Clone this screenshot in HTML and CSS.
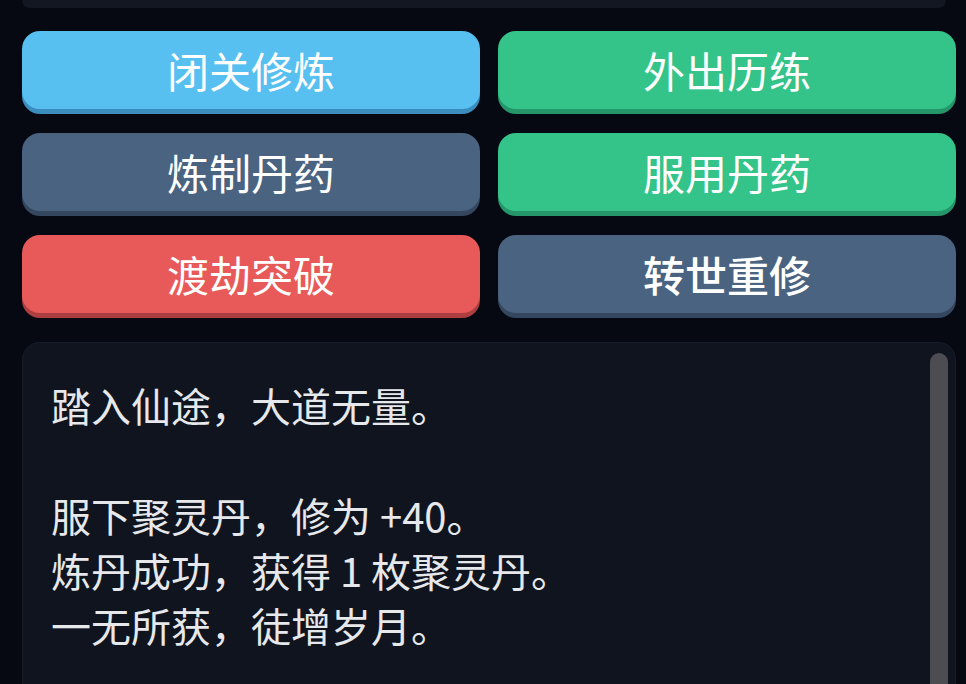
FILE: index.html
```html
<!DOCTYPE html>
<html lang="zh-CN">
<head>
<meta charset="utf-8">
<title>修仙</title>
<link rel="stylesheet" href="styles.css">
</head>
<body>
<div class="app">
  <div class="top-panel"></div>
  <div class="actions">
    <button class="btn btn-blue">闭关修炼</button>
    <button class="btn btn-green">外出历练</button>
    <button class="btn btn-slate">炼制丹药</button>
    <button class="btn btn-green">服用丹药</button>
    <button class="btn btn-red">渡劫突破</button>
    <button class="btn btn-slate btn-strong">转世重修</button>
  </div>
  <div class="log">
    <div class="log-text">
      <p class="line">踏入仙途，大道无量。</p>
      <p class="line blank">&nbsp;</p>
      <p class="line">服下聚灵丹，修为 +40。</p>
      <p class="line">炼丹成功，获得 1 枚聚灵丹。</p>
      <p class="line">一无所获，徒增岁月。</p>
    </div>
    <div class="scrollbar"></div>
  </div>
</div>
</body>
</html>
```

FILE: styles.css
```css
* { box-sizing: border-box; }

html, body {
  margin: 0;
  padding: 0;
  height: 100%;
  overflow: hidden;
  background: #060912;
  font-family: "Noto Sans CJK SC", "Noto Sans", sans-serif;
}

.app {
  height: 100vh;
  overflow: hidden;
  padding: 0 10px 0 22px;
  display: flex;
  flex-direction: column;
}

.top-panel {
  flex: none;
  height: 8px;
  background: #121722;
  border-radius: 0 0 16px 16px;
  margin-right: 10px;
}

.actions {
  flex: none;
  margin-top: 23px;
  display: grid;
  grid-template-columns: 1fr 1fr;
  column-gap: 18px;
  row-gap: 24px;
}

.btn {
  height: 78px;
  border: none;
  border-radius: 18px;
  color: #ffffff;
  font-family: "Noto Sans CJK SC", "Noto Sans", sans-serif;
  font-size: 42px;
  font-weight: 400;
  line-height: 1;
  padding: 0;
}

.btn-strong { font-weight: 500; }

.btn-blue  { background: #57c0f1; box-shadow: 0 5px 0 #3a8dbd; }
.btn-green { background: #34c48a; box-shadow: 0 5px 0 #24966a; }
.btn-slate { background: #4a6381; box-shadow: 0 5px 0 #34475f; }
.btn-red   { background: #e85a5a; box-shadow: 0 5px 0 #ad3f40; }

.log {
  flex: 1;
  min-height: 0;
  margin-top: 29px;
  background: #0f141e;
  border: 1px solid #171d28;
  border-bottom: none;
  border-radius: 18px 18px 0 0;
  display: flex;
  padding: 10px 7px 0 28px;
}

.log-text {
  flex: 1;
  padding-top: 25px;
  color: #e6e8ec;
  font-size: 40px;
  line-height: 55px;
}

.line { margin: 0; white-space: nowrap; }

.scrollbar {
  width: 18px;
  background: #4d4c53;
  border-radius: 9px 9px 0 0;
}
```
